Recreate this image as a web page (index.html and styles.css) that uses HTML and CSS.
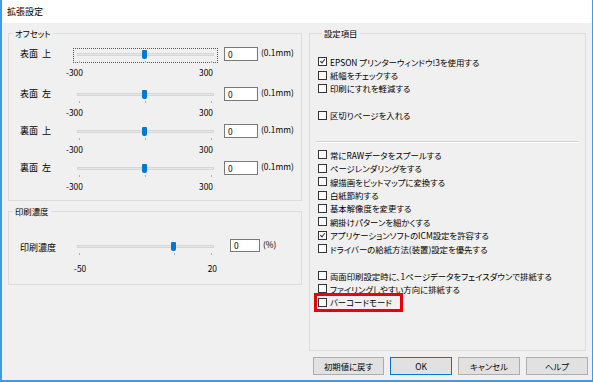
FILE: index.html
```html
<!DOCTYPE html>
<html lang="ja">
<head>
  <meta charset="UTF-8" />
  <title>拡張設定</title>
  <link rel="stylesheet" href="styles.css">
</head>
<body>
  <div class="window">
    <div class="titlebar">拡張設定</div>

    <div class="content">
      <div class="left-col">
        <fieldset class="group offset">
          <legend>オフセット</legend>

          <div class="srow first">
            <div class="line">
              <span class="slabel">表面&nbsp; 上</span>
              <div class="slider focus"><div class="track"></div><div class="thumb" style="left: 68px"></div><div class="ticks"><i></i><i></i><i></i></div></div>
              <div class="num">0</div>
              <span class="unit">(0.1mm)</span>
            </div>
            <div class="scale"><span>-300</span><span>300</span></div>
          </div>

          <div class="srow">
            <div class="line">
              <span class="slabel">表面&nbsp; 左</span>
              <div class="slider"><div class="track"></div><div class="thumb" style="left: 68px"></div><div class="ticks"><i></i><i></i><i></i></div></div>
              <div class="num">0</div>
              <span class="unit">(0.1mm)</span>
            </div>
            <div class="scale"><span>-300</span><span>300</span></div>
          </div>

          <div class="srow">
            <div class="line">
              <span class="slabel">裏面&nbsp; 上</span>
              <div class="slider"><div class="track"></div><div class="thumb" style="left: 68px"></div><div class="ticks"><i></i><i></i><i></i></div></div>
              <div class="num">0</div>
              <span class="unit">(0.1mm)</span>
            </div>
            <div class="scale"><span>-300</span><span>300</span></div>
          </div>

          <div class="srow">
            <div class="line">
              <span class="slabel">裏面&nbsp; 左</span>
              <div class="slider"><div class="track"></div><div class="thumb" style="left: 68px"></div><div class="ticks"><i></i><i></i><i></i></div></div>
              <div class="num">0</div>
              <span class="unit">(0.1mm)</span>
            </div>
            <div class="scale"><span>-300</span><span>300</span></div>
          </div>
        </fieldset>

        <fieldset class="group density">
          <legend>印刷濃度</legend>
          <div class="srow">
            <div class="line">
              <span class="slabel low">印刷濃度</span>
              <div class="slider"><div class="track"></div><div class="thumb" style="left: 97px"></div><div class="ticks"><i></i><i style="left: 100px"></i><i></i></div></div>
              <div class="num small">0</div>
              <span class="unit">(%)</span>
            </div>
            <div class="scale short"><span>-50</span><span>20</span></div>
          </div>
        </fieldset>
      </div>

      <fieldset class="group settings">
        <legend>設定項目</legend>
        <div class="checks">
          <div class="chk on"><span class="box"></span>EPSON プリンターウィンドウ!3を使用する</div>
          <div class="chk"><span class="box"></span>紙幅をチェックする</div>
          <div class="chk"><span class="box"></span>印刷にすれを軽減する</div>
          <div class="chk gap"><span class="box"></span>区切りページを入れる</div>
        </div>
        <div class="sep"></div>
        <div class="checks">
          <div class="chk"><span class="box"></span>常にRAWデータをスプールする</div>
          <div class="chk"><span class="box"></span>ページレンダリングをする</div>
          <div class="chk"><span class="box"></span>線描画をビットマップに変換する</div>
          <div class="chk"><span class="box"></span>白紙節約する</div>
          <div class="chk"><span class="box"></span>基本解像度を変更する</div>
          <div class="chk"><span class="box"></span>網掛けパターンを細かくする</div>
          <div class="chk on"><span class="box"></span>アプリケーションソフトのICM設定を許容する</div>
          <div class="chk"><span class="box"></span>ドライバーの給紙方法(装置)設定を優先する</div>
        </div>
        <div class="checks third">
          <div class="chk"><span class="box"></span>両面印刷設定時に、1ページデータをフェイスダウンで排紙する</div>
          <div class="chk"><span class="box"></span>ファイリングしやすい方向に排紙する</div>
          <div class="chk"><span class="mark"><span class="box"></span>バーコードモード</span></div>
        </div>
      </fieldset>
    </div>

    <div class="buttons">
      <button class="wide">初期値に戻す</button>
      <button class="default">OK</button>
      <button>キャンセル</button>
      <button>ヘルプ</button>
    </div>
  </div>
</body>
</html>
```

FILE: styles.css
```css
html, body {
  margin: 0;
  padding: 0;
}
body {
  font-family: "Noto Sans CJK JP", "Noto Sans", sans-serif;
  font-size: 8.4px;
  font-feature-settings: "palt";
  color: #000;
  background: #fff;
}
.window {
  width: 593px;
  height: 382px;
  box-sizing: border-box;
  border-left: 2px solid #3d9be9;
  border-right: 1px solid #3d9be9;
  border-bottom: 2px solid #3d9be9;
  background: #f0f0f0;
  display: flex;
  flex-direction: column;
}
.titlebar {
  height: 23px;
  line-height: 23px;
  padding-left: 5px;
  font-size: 9px;
  background: #fff;
  flex: none;
}
.content {
  display: flex;
  gap: 7px;
  padding: 4px 6px 0 6px;
}
.left-col {
  width: 294px;
  display: flex;
  flex-direction: column;
  gap: 4px;
}

/* group boxes */
.group {
  margin: 0;
  padding: 0;
  border: 1px solid #dcdcdc;
  min-inline-size: auto;
  box-sizing: border-box;
}
.group legend {
  padding: 0 2px;
  margin-left: 4px;
  line-height: 12px;
}
.offset {
  height: 174px;
  padding-top: 8px;
}
.density {
  height: 80px;
  padding-top: 22px;
}
.settings {
  width: 277px;
  height: 324px;
  padding: 16px 0 0 8px;
}

/* slider rows */
.srow {
  padding-left: 11px;
  height: 37px;
}
.srow.first {
  height: 40px;
}
.line {
  display: flex;
  align-items: flex-start;
  height: 14px;
}
.slabel {
  width: 53px;
  line-height: 14px;
  font-size: 9px;
}
.slabel.low {
  line-height: 17px;
}
.slider {
  position: relative;
  width: 145px;
  height: 15px;
  box-sizing: border-box;
  margin-top: 1px;
  border: 1px dotted transparent;
}
.slider.focus {
  border-color: #555;
}
.track {
  position: absolute;
  left: 3px;
  right: 3px;
  top: 4px;
  height: 3px;
  background: #e7e7e7;
  border: 1px solid #d6d6d6;
  box-sizing: border-box;
}
.thumb {
  position: absolute;
  top: 1px;
  width: 5px;
  height: 9px;
  background: #0078d7;
  border-radius: 1px 1px 2px 2px;
}
.ticks i {
  position: absolute;
  top: 12px;
  width: 1px;
  height: 2px;
  background: #b0b0b0;
}
.ticks i:nth-child(1) { left: 5px; }
.ticks i:nth-child(2) { left: 71px; }
.ticks i:nth-child(3) { left: 137px; }
.num {
  width: 34px;
  height: 14px;
  box-sizing: border-box;
  margin-left: 6px;
  border: 1px solid #7a7a7a;
  background: #fff;
  padding-left: 3px;
  line-height: 12px;
}
.num.small {
  width: 30px;
  height: 13px;
  margin-left: 12px;
  line-height: 11px;
}
.unit {
  margin-left: 3px;
  line-height: 10px;
}
.scale {
  display: flex;
  justify-content: space-between;
  width: 147px;
  margin: 6px 0 0 46px;
  line-height: 10px;
}
.scale.short {
  width: 143px;
  margin: 10px 0 0 54px;
}

/* check boxes */
.chk {
  display: flex;
  align-items: center;
  height: 13.4px;
  white-space: nowrap;
}
.chk.gap {
  margin-top: 13.6px;
}
.box {
  width: 9px;
  height: 9px;
  box-sizing: border-box;
  border: 1px solid #333;
  background: #fff;
  margin-right: 3px;
  flex: none;
  position: relative;
}
.chk.on .box::after {
  content: "";
  position: absolute;
  left: 2px;
  top: 0px;
  width: 2px;
  height: 4px;
  border-right: 1px solid #333;
  border-bottom: 1px solid #333;
  transform: rotate(40deg);
}
.sep {
  height: 1px;
  background: #d4d4d4;
  border-bottom: 1px solid #fff;
  margin: 19px 6px 5px -2px;
}
.checks.third {
  margin-top: 13.6px;
}
.mark {
  display: inline-flex;
  align-items: center;
  height: 13px;
  padding: 0 8px 0 1px;
  margin-left: -1px;
  outline: 3px solid #e8000b;
}

/* buttons */
.buttons {
  display: flex;
  justify-content: flex-end;
  gap: 6px;
  padding: 6px 4px 0 0;
}
.buttons button {
  width: 62px;
  height: 18px;
  padding: 0;
  font: inherit;
  font-feature-settings: "palt";
  background: #e1e1e1;
  border: 1px solid #adadad;
  color: #000;
}
.buttons button.wide {
  width: 71px;
}
.buttons button.default {
  border: 1px solid #0078d7;
}
```
